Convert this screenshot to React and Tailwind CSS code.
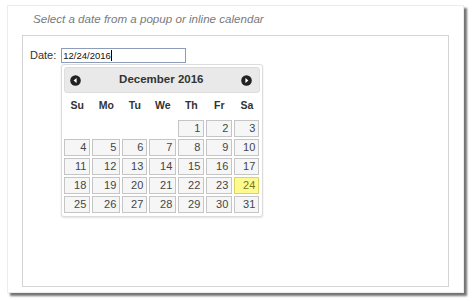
import React from "react";

const font = { fontFamily: '"Liberation Sans", Arial, sans-serif' };

function Arrow({ dir }) {
  return (
    <svg width="11" height="11" viewBox="0 0 11 11">
      <circle cx="5.5" cy="5.5" r="5.3" fill="#222" />
      {dir === "prev" ? (
        <path d="M6.6 3 L3.6 5.5 L6.6 8 Z" fill="#fff" />
      ) : (
        <path d="M4.4 3 L7.4 5.5 L4.4 8 Z" fill="#fff" />
      )}
    </svg>
  );
}

export default function App() {
  const days = [];
  for (let i = 0; i < 4; i++) days.push(null);
  for (let d = 1; d <= 31; d++) days.push(d);
  const heads = ["Su", "Mo", "Tu", "We", "Th", "Fr", "Sa"];
  return (
    <div
      className="w-[474px] h-[301px] bg-white pt-[5px] pl-[7px] overflow-hidden"
      style={font}
    >
      <div className="w-[457px] h-[288px] bg-white border border-[#ececec] shadow-[3px_3px_2px_rgba(0,0,0,0.55)] flex flex-col">
        <div className="h-[29px] pl-[25px] pt-[3px] text-[11.6px] italic text-[#7a7a7a] leading-[20px]">
          Select a date from a popup or inline calendar
        </div>
        <div className="ml-[14px] w-[427px] h-[252px] border border-[#d4d4d4] pt-[12px] pl-[7px]">
          <div className="flex items-center gap-[5px]">
            <span className="text-[11px] text-[#333] leading-[15px]">Date:</span>
            <div className="relative">
              <div className="w-[125px] h-[15px] border border-[#8d9cb8] flex items-center pl-[1px] text-[9.5px] text-[#111] leading-none">
                12/24/2016<span className="inline-block w-[1px] h-[11px] bg-black" />
              </div>
              <div className="absolute left-0 top-full mt-[1px] w-[202px] h-[153px] bg-white border border-[#dcdcdc] rounded-[3px] p-[2px] shadow-[0_1px_2px_rgba(0,0,0,0.12)] z-10">
                <div className="h-[26px] bg-[#e9e9e9] border border-[#dddddd] rounded-[3px] flex items-center justify-between pl-[5px] pr-[7px]">
                  <Arrow dir="prev" />
                  <span className="text-[11.5px] font-bold text-[#333]">December 2016</span>
                  <Arrow dir="next" />
                </div>
                <div className="grid grid-cols-[28px_30px_27px_29px_28px_28px_27px] -ml-[1px]">
                  {heads.map((h) => (
                    <div
                      key={h}
                      className="h-[26px] flex items-center justify-center text-[10.5px] font-bold text-[#333]"
                    >
                      {h}
                    </div>
                  ))}
                  {days.map((d, i) => (
                    <div key={i} className="p-[1px]">
                      {d === null ? (
                        <div className="h-[17px]" />
                      ) : (
                        <div
                          className={
                            d === 24
                              ? "h-[17px] border border-[#dad55e] bg-[#fffa90] text-[#777620] text-[11px] text-right pr-[3px] leading-[15px]"
                              : "h-[17px] border border-[#c5c5c5] bg-[#f6f6f6] text-[#454545] text-[11px] text-right pr-[3px] leading-[15px]"
                          }
                        >
                          {d}
                        </div>
                      )}
                    </div>
                  ))}
                </div>
              </div>
            </div>
          </div>
        </div>
      </div>
    </div>
  );
}
